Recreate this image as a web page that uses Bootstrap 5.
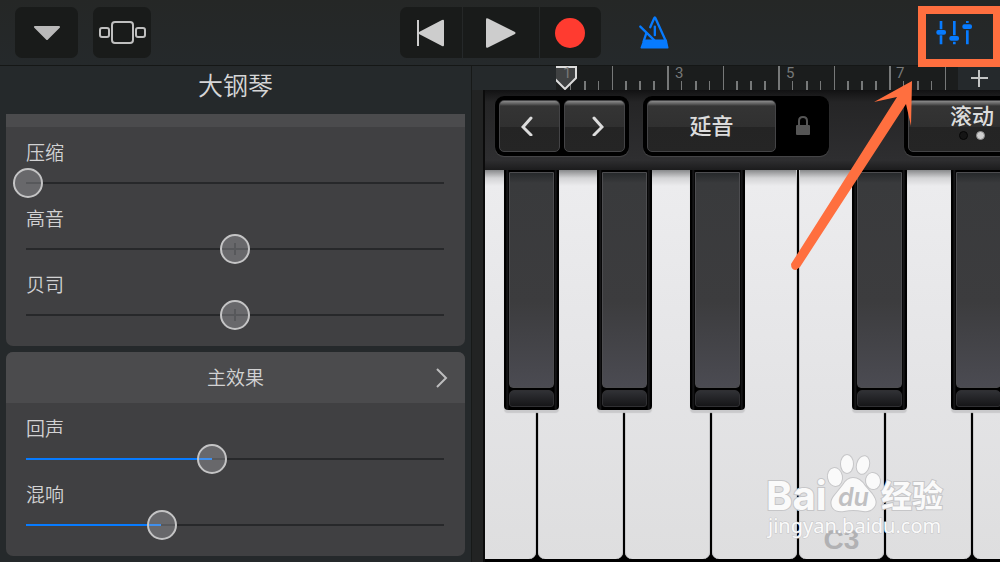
<!DOCTYPE html>
<html lang="zh-CN">
<head>
<meta charset="utf-8">
<meta name="viewport" content="width=device-width, initial-scale=1">
<title>大钢琴</title>
<link href="https://cdn.jsdelivr.net/npm/bootstrap@5.3.0/dist/css/bootstrap.min.css" rel="stylesheet">
<style>
  body { background: #25292b; color: #d2d2d3; font-family: "Noto Sans CJK SC", sans-serif; overflow-x: hidden; }
  button { border: 0; padding: 0; color: inherit; }
  svg { display: block; flex-shrink: 0; }

  .topbar { height: 66px; padding: 7px 0 7px 15px; background: linear-gradient(#252726, #25292b); border-bottom: 1px solid #151716; }
  .side { flex: 1 1 0; }
  .side-left { gap: 15px; }
  .tool { height: 51px; border-radius: 7px; background: #191b1a; }
  .tool-menu { width: 63px; }
  .tool-view { width: 58px; }
  .transport { width: 201px; margin-left: -14px; gap: 1px; }
  .transport .tool { flex: 1 1 0; border-radius: 0; }
  .transport .tool:first-child { border-radius: 7px 0 0 7px; }
  .transport .tool:nth-child(2) { min-width: 76px; }
  .transport .tool:last-child { border-radius: 0 7px 7px 0; }
  .flat { background: none; }
  .metronome { margin-left: 38px; }
  .mixer { margin-right: 27px; }

  .settings { width: 47.2%; flex-shrink: 0; padding: 0 6px 6px 6px; border-right: 1px solid #171918; }
  .settings h1 { font-size: 25px; line-height: 36px; height: 48px; font-weight: 350; margin: 0; color: #d6d6d7; }
  .group { background: #404042; border-radius: 7px; padding-bottom: 11px; overflow: hidden; }
  .group + .group { margin-top: 6px; }
  .group-first { border-radius: 0 0 7px 7px; }
  .strip { height: 13px; margin-bottom: 9px; background: #4b4b4d; }
  .group-head { height: 51px; margin-bottom: 9px; background: #4b4b4d; font-size: 19px; font-weight: 350; }
  .group-head svg { right: 17px; }
  .control { height: 66px; }
  .control:last-child { height: 67px; }
  .control label { display: block; height: 32px; line-height: 31px; padding-left: 20px; font-size: 19px; font-weight: 350; }
  .control input { -webkit-appearance: none; appearance: none; display: block; height: 30px; width: calc(100% - 15px); margin: 0 8px 0 7px; background: none; }
  .control input::-webkit-slider-runnable-track {
    height: 30px;
    background: linear-gradient(90deg, #077bff var(--fill, 0%), #27282a var(--fill, 0%)) center / calc(100% - 26px) 2px no-repeat;
  }
  .control input.centred::-webkit-slider-runnable-track {
    background: linear-gradient(#27282a, #27282a) center / 2px 12px no-repeat, linear-gradient(#27282a, #27282a) center / calc(100% - 26px) 2px no-repeat;
  }
  .control input::-webkit-slider-thumb {
    -webkit-appearance: none; width: 30px; height: 30px; border-radius: 50%;
    background: rgba(190, 190, 195, .32); border: 2px solid #c4c4c5;
  }

  .instrument { flex: 1 1 0; min-width: 0; }
  .timeline { height: 24px; padding-left: 84px; }
  .ticks { flex: 1 1 0; min-width: 0; overflow: hidden; background: #1b1d1d; }
  .ticks text { font: 15px Roboto, sans-serif; fill: #767878; }
  .add { width: 42px; background: #25292c; }
  .board { margin-left: 11px; border-left: 2px solid #0b0b0b; overflow: hidden; }
  .gutter { background: #222323; }
  .deck { height: 80px; padding: 6px 0 0 10px; background: linear-gradient(#121213, #252526 12px, #2e2e30 70px, #1c1c1d); }
  .well { height: 60px; padding: 4px; gap: 4px; border-radius: 9px; background: #000; box-shadow: 0 1px 1px #48484a; flex-shrink: 0; }
  .well-sustain { margin-left: 14px; }
  .well-scroll { width: 136px; margin: 0 -40px 0 auto; }
  .pad { height: 52px; border: 1px solid #444446; border-radius: 5px; background: linear-gradient(#8a8a8a, #5a5a5a 3px, #343434 5px, #303030 26px, #242424 26px, #252525); color: #dcdcdc; font-size: 22px; font-weight: 500; line-height: 26px; }
  .pad-step { width: 61px; }
  .pad-sustain { width: 129px; padding-bottom: 4px; }
  .lock { width: 45px; background: none; }
  .lamps { gap: 8px; margin-top: 4px; }
  .lamp { width: 9px; height: 9px; border-radius: 50%; background: #151515; border: 1px solid #060606; }
  .lamp-on { background: #cfcfcf; border-color: #8d8d8d; }

  .keys { background: #000; gap: 2px; padding-bottom: 3px; overflow: hidden; }
  .keys > div { flex: 0 0 85px; }
  .keys > div:first-child { margin-left: -34px; }
  .ivory { background: linear-gradient(#88898b, #d3d3d5 8px, #ececee 16px, #e4e4e6 55%, #dededf); border-radius: 0 0 7px 7px; box-shadow: inset 1px 0 #c9c9cb, inset -1px 0 #c9c9cb; }
  .ivory span { font: bold 28px/28px "Liberation Sans", sans-serif; color: #b1b1b3; padding-bottom: 5px; }
  .ebony { top: 0; z-index: 2; right: -29px; width: 55px; height: 240px; padding: 2px 5px 3px; background: linear-gradient(90deg, #000 2px, #1c1c1e 3px, #000 5px, #000 50px, #1c1c1e 52px, #000 53px); border-radius: 0 0 4px 4px; box-shadow: 0 3px 1px #c9c9cb; }
  .ebony.low { right: -23px; }
  .ebony.high { right: -35px; }
  .ebony::before { content: ""; display: block; height: 216px; border: 1px solid #4d4d50; border-radius: 0 0 4px 4px; background: linear-gradient(#26292b, #393a3c 10px, #3c3c3e 60%, #4b4b52); }
  .ebony::after { content: ""; display: block; height: 17px; margin-top: 2px; border: 1px solid #303033; border-radius: 5px 5px 3px 3px; background: linear-gradient(#303135, #161618); }

  .callout { top: 0; right: 0; z-index: 5; pointer-events: none; }
  .mark-logo { right: 50px; bottom: 16px; z-index: 4; pointer-events: none; }
</style>
</head>
<body class="d-flex flex-column min-vh-100 position-relative">
<header class="topbar d-flex">
  <div class="side side-left d-flex">
    <button class="tool tool-menu d-flex align-items-center justify-content-center" aria-label="菜单">
      <svg width="28" height="15" viewBox="0 0 28 15"><path d="M2 2H26L14 14Z" fill="#b9b9b9" stroke="#b9b9b9" stroke-width="2" stroke-linejoin="round"/></svg>
    </button>
    <button class="tool tool-view d-flex align-items-center justify-content-center" aria-label="视图">
      <svg width="47" height="23" viewBox="0 0 47 23" fill="none" stroke="#bfbfbf" stroke-width="2"><rect x="13" y="1" width="21" height="21" rx="3"/><rect x="1" y="7" width="9" height="9" rx="2"/><rect x="37" y="7" width="9" height="9" rx="2"/></svg>
    </button>
  </div>
  <div class="transport d-flex">
    <button class="tool d-flex align-items-center justify-content-center" aria-label="回到开头">
      <svg width="28" height="30" viewBox="0 0 28 30" fill="#cdcdcd"><path d="M0 2h2v12L25 2q2-1 2 1v24q0 2-2 1L2 16v12H0Z"/></svg>
    </button>
    <button class="tool d-flex align-items-center justify-content-center" aria-label="播放">
      <svg width="30" height="30" viewBox="0 0 30 30" fill="#cdcdcd"><path d="M0 1.500Q0-.5 2 .5L29 14q1 1 0 2L2 29.500q-2 1-2-1Z"/></svg>
    </button>
    <button class="tool d-flex align-items-center justify-content-center" aria-label="录音">
      <svg width="30" height="30" viewBox="0 0 30 30"><circle cx="15" cy="15" r="15" fill="#ff3b30"/></svg>
    </button>
  </div>
  <div class="side d-flex align-items-center">
    <button class="flat metronome" aria-label="节拍器">
      <svg width="31" height="35" viewBox="745 44 94 106" fill="none" stroke="#077bff" stroke-width="7" stroke-linecap="round" stroke-linejoin="round">
        <path d="M767 100l-8 24h68L795 54q-2-5-4 0l-12 27"/><path d="M749 79l42 41M793 79v26"/><path d="M760 121h67l5 22h-80Z" fill="#077bff" stroke-width="5"/></svg>
    </button>
    <button class="flat mixer ms-auto" aria-label="混音设置">
      <svg width="37" height="26" viewBox="168 57 111 78" fill="#077bff"><path d="M179 60h8v25h-8Zm0 43h8v27h-8ZM219 60h8v43h-8Zm0 62h8v8h-8ZM258 60h8v6h-8Zm0 28h8v42h-8Z"/><rect x="169" y="87" width="29" height="14" rx="6"/><rect x="208" y="105" width="29" height="14" rx="6"/><rect x="247" y="70" width="29" height="14" rx="6"/></svg>
    </button>
  </div>
</header>

<main class="d-flex flex-grow-1">
  <section class="settings">
    <h1 class="text-center">大钢琴</h1>
    <div class="group group-first">
      <div class="strip"></div>
      <div class="control"><label for="comp">压缩</label><input id="comp" type="range" min="0" max="1000" value="0"></div>
      <div class="control"><label for="treble">高音</label><input id="treble" class="centred" type="range" min="0" max="1000" value="500"></div>
      <div class="control"><label for="bass">贝司</label><input id="bass" class="centred" type="range" min="0" max="1000" value="500"></div>
    </div>
    <div class="group">
      <button class="group-head w-100 d-flex align-items-center justify-content-center position-relative">主效果
        <svg class="position-absolute" width="13" height="22" viewBox="0 0 13 22" fill="none" stroke="#bdbdbe" stroke-width="2"><path d="M2 2l9 9-9 9"/></svg>
      </button>
      <div class="control"><label for="echo">回声</label><input id="echo" type="range" min="0" max="1000" value="444" style="--fill:44.4%"></div>
      <div class="control"><label for="reverb">混响</label><input id="reverb" type="range" min="0" max="1000" value="323" style="--fill:32.3%"></div>
    </div>
  </section>

  <section class="instrument d-flex flex-column">
    <div class="timeline d-flex">
      <div class="ticks">
        <svg width="1600" height="24" viewBox="556 66 1600 24">
          <defs><pattern id="bar" x="556" y="65" width="111" height="25" patternUnits="userSpaceOnUse">
            <path d="M0 1h2v24H0ZM56 1h1v24h-1Z M14 16h1v9h-1ZM28 16h2v9h-2ZM42 16h1v9h-1ZM69 16h2v9h-2ZM83 16h2v9h-2ZM97 16h2v9h-2Z" fill="#777979"/></pattern></defs>
          <rect x="558" y="65" width="1600" height="25" fill="url(#bar)"/>
          <text x="675" y="78">3</text><text x="786" y="78">5</text><text x="896" y="78">7</text>
          <path d="M554 67h22v11l-11 11-11-11Z" fill="#404243" stroke="#dcdcdc" stroke-width="2"/>
          <text x="563" y="78">1</text>
        </svg>
      </div>
      <button class="add d-flex align-items-center justify-content-center" aria-label="添加段落">
        <svg width="17" height="17" viewBox="0 0 17 17" fill="none" stroke="#c4c5c5" stroke-width="2"><path d="M8 0v17M0 8h17"/></svg>
      </button>
    </div>
    <div class="gutter flex-grow-1 d-flex flex-column">
      <div class="board flex-grow-1 d-flex flex-column">
        <div class="deck d-flex align-items-start">
          <div class="well d-flex">
            <button class="pad pad-step d-flex align-items-center justify-content-center" aria-label="低八度"><svg width="18" height="20" viewBox="0 0 18 20" fill="none" stroke="#dcdcdc" stroke-width="3" stroke-linecap="round"><path d="M10 2L2 11l8 8"/></svg></button>
            <button class="pad pad-step d-flex align-items-center justify-content-center" aria-label="高八度"><svg width="18" height="20" viewBox="0 0 18 20" fill="none" stroke="#dcdcdc" stroke-width="3" stroke-linecap="round"><path d="M8 2l8 9-8 8"/></svg></button>
          </div>
          <div class="well well-sustain d-flex">
            <button class="pad pad-sustain">延音</button>
            <button class="lock d-flex align-items-center justify-content-center" aria-label="锁定"><svg width="14" height="20" viewBox="0 0 14 20"><path d="M3 10V5q0-4 4-4t4 4v5" fill="none" stroke="#555" stroke-width="2"/><rect y="9" width="14" height="10" rx="1" fill="#555"/></svg></button>
          </div>
          <div class="well well-scroll">
            <button class="pad w-100 d-flex flex-column align-items-center">滚动
              <span class="lamps d-flex"><i class="lamp"></i><i class="lamp lamp-on"></i></span>
            </button>
          </div>
        </div>
        <div class="keys flex-grow-1 d-flex">
          <div class="position-relative d-flex"><button class="ivory w-100" aria-label="F2"></button><button class="ebony low position-absolute" aria-label="F♯2"></button></div>
          <div class="position-relative d-flex"><button class="ivory w-100" aria-label="G2"></button><button class="ebony position-absolute" aria-label="G♯2"></button></div>
          <div class="position-relative d-flex"><button class="ivory w-100" aria-label="A2"></button><button class="ebony high position-absolute" aria-label="A♯2"></button></div>
          <div class="position-relative d-flex"><button class="ivory w-100" aria-label="B2"></button></div>
          <div class="position-relative d-flex"><button class="ivory w-100 d-flex align-items-end justify-content-center"><span>C3</span></button><button class="ebony low position-absolute" aria-label="C♯3"></button></div>
          <div class="position-relative d-flex"><button class="ivory w-100" aria-label="D3"></button><button class="ebony high position-absolute" aria-label="D♯3"></button></div>
          <div class="position-relative d-flex"><button class="ivory w-100" aria-label="E3"></button></div>
        </div>
      </div>
    </div>
  </section>
</main>

<svg class="callout position-absolute" width="220" height="280" viewBox="780 0 220 280">
  <rect x="922" y="10" width="75" height="53" fill="none" stroke="#ff6f3f" stroke-width="8"/>
  <path d="M912 81L874 102L897 97L791 264Q791 270 796 270L800 267L906 104L911 126Z" fill="#ff6f3f"/>
</svg>

<svg class="mark-logo position-absolute" width="190" height="96" viewBox="760 450 190 96" fill="#fafafa">
  <g stroke="#c6c6c8" stroke-width="2" paint-order="stroke">
    <text x="766" y="510" font-family="Inter, sans-serif" font-weight="700" font-size="40">Bai</text>
    <ellipse cx="835" cy="477" rx="7" ry="9" transform="rotate(-10 835 477)"/>
    <ellipse cx="847" cy="464" rx="6" ry="9"/>
    <ellipse cx="863" cy="465" rx="6" ry="9" transform="rotate(15 863 465)"/>
    <ellipse cx="873" cy="481" rx="7" ry="8" transform="rotate(-10 873 481)"/>
    <path d="M853 478q7 0 12 8l7 8q6 8 2 13-4 5-11 4-10-2-19 0-8 1-11-3-4-6 2-13l8-10q4-7 10-7Z"/>
    <text x="881" y="507" font-family="'Noto Sans CJK SC', sans-serif" font-weight="700" font-size="31">经验</text>
    <text x="768" y="533" font-family="'Noto Sans', sans-serif" font-size="20" stroke-width="1">jingyan.baidu.com</text>
  </g>
  <text x="838" y="506" font-family="Inter, sans-serif" font-weight="600" font-size="25" font-style="italic" fill="#c0c0c2">du</text>
</svg>
<script src="https://cdn.jsdelivr.net/npm/bootstrap@5.3.0/dist/js/bootstrap.bundle.min.js"></script>
</body>
</html>
